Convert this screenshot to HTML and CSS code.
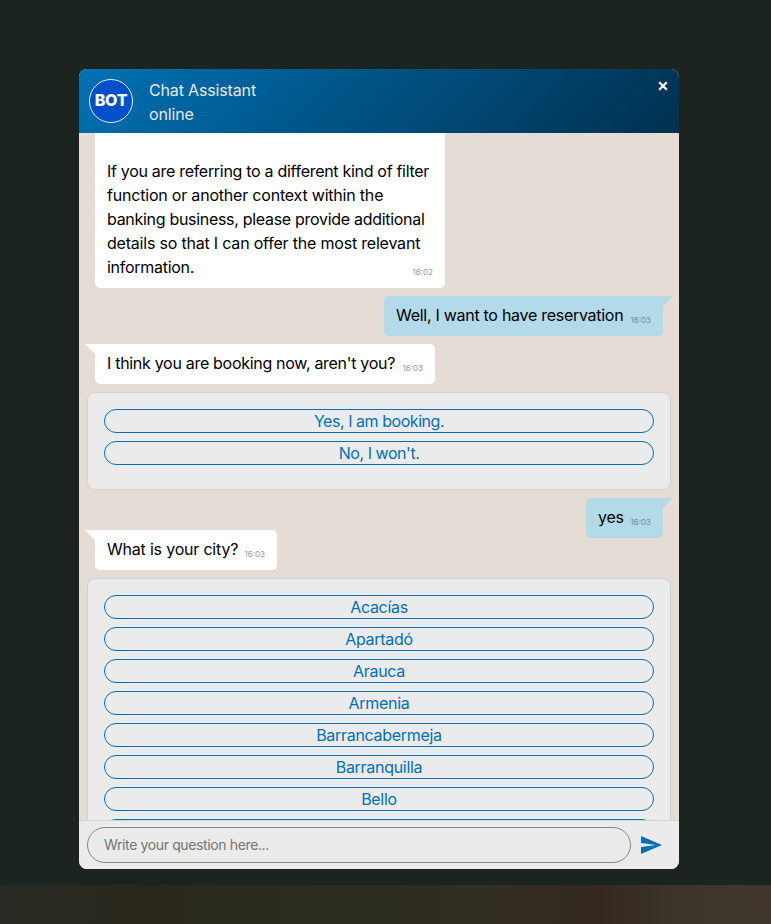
FILE: index.html
```html
<!DOCTYPE html>
<html lang="en">
<head>
<meta charset="utf-8">
<title>Chat Assistant</title>
<link rel="stylesheet" href="styles.css">
</head>
<body>
<main class="backdrop">
  <section class="chat">
    <header class="chat-header">
      <div class="avatar">BOT</div>
      <div class="identity"><div class="name">Chat Assistant</div><div class="status">online</div></div>
      <button class="close" aria-label="Close"><svg width="10" height="10" viewBox="0 0 10 10"><path d="M1.2 1.2 8.8 8.8M8.8 1.2 1.2 8.8" stroke="#fff" stroke-width="2.2"/></svg></button>
    </header>
    <div class="messages">
      <div class="bubble bot continued">
        <p class="text long"><span class="l1">If you are referring to a different kind of filter</span><br><span class="l2">function or another context within the</span><br><span class="l3">banking business, please provide additional</span><br><span class="l4">details so that I can offer the most relevant</span><br><span class="l5">information.</span></p>
        <time>16:02</time>
      </div>
      <div class="bubble user"><span class="text reservation">Well, I want to have reservation</span><time>16:03</time></div>
      <div class="bubble bot"><span class="text booking">I think you are booking now, aren't you?</span><time>16:03</time></div>
      <div class="options">
        <button class="tight">Yes, I am booking.</button>
        <button class="tight">No, I won't.</button>
      </div>
      <div class="bubble user"><span class="text yes">yes</span><time>16:03</time></div>
      <div class="bubble bot overlap"><span class="text city">What is your city?</span><time>16:03</time></div>
      <div class="options">
        <button>Acacías</button>
        <button>Apartadó</button>
        <button>Arauca</button>
        <button>Armenia</button>
        <button>Barrancabermeja</button>
        <button>Barranquilla</button>
        <button>Bello</button>
        <button></button>
      </div>
    </div>
    <footer class="composer">
      <input type="text" placeholder="Write your question here...">
      <button class="send" aria-label="Send"><svg width="21" height="18" viewBox="0 0 21 18"><path d="M0 18 21 9 0 0V7L15 9 0 11Z" fill="#0071b6"/></svg></button>
    </footer>
  </section>
</main>
<div class="page-strip"></div>
</body>
</html>
```
FILE: styles.css
```css
* { box-sizing: border-box; }
body {
  margin: 0;
  height: 924px;
  overflow: hidden;
  display: flex;
  flex-direction: column;
  background: #1c241f;
  font: 16px/24px Inter, "Liberation Sans", sans-serif;
}
button { font: inherit; padding: 0; border: 0; background: none; }
.backdrop { height: 885px; padding: 69px 92px 16px 79px; }
.page-strip {
  height: 39px;
  background: linear-gradient(90deg, #282a23 0, #29271b 20%, #2a2b1e 32%, #2c2c20 50%, #322e23 62%, #35291f 78%, #3c342a 88%, #40362d 100%);
}
.chat {
  width: 600px;
  height: 800px;
  border-radius: 8px;
  overflow: hidden;
  display: flex;
  flex-direction: column;
  background: #e5dcd6;
}
.chat-header {
  flex: none;
  height: 64px;
  padding: 10px;
  display: flex;
  color: #e8e8e8;
  background: linear-gradient(135deg, #0072b5, #00304e);
}
.avatar {
  width: 44px;
  height: 44px;
  border: 1px solid #e9edf5;
  border-radius: 50%;
  background: #0050cc;
  color: #fff;
  font-weight: 800;
  letter-spacing: -.2px;
  line-height: 41px;
  text-align: center;
}
.identity { margin: -1px 0 0 16px; flex: 1; letter-spacing: -.15px; }
.close { width: 10px; height: 10px; margin: 2px 1px 0 0; line-height: 0; }
.messages {
  flex: 1;
  min-height: 0;
  overflow: hidden;
  padding: 0 8px;
  display: flex;
  flex-direction: column;
  gap: 8px;
}
.bubble {
  position: relative;
  flex: none;
  height: 40px;
  padding: 7px 12px 8px;
  border-radius: 5px;
  display: flex;
  justify-content: space-between;
  color: #000;
}
.text { white-space: nowrap; }
.bot { align-self: flex-start; margin-left: 8px; background: #fff; }
.user { align-self: flex-end; margin-right: 8px; background: #b2dae9; }
.bot:not(.continued)::before, .user::after {
  content: "";
  position: absolute;
  top: 0;
  width: 18px;
  height: 10px;
}
.bot:not(.continued)::before { left: -10px; background: #fff; clip-path: polygon(0 0, 100% 0, 100% 100%, 10px 100%); }
.user::after { right: -10px; background: #b2dae9; clip-path: polygon(0 0, 100% 0, 8px 100%, 0 100%); }
time { align-self: flex-end; font-size: 8px; line-height: 8px; margin-bottom: 4px; color: #999; }
.user time { color: #728e98; }
.continued { width: 350px; height: 155px; padding-top: 26px; border-radius: 0 0 5px 5px; }
.long { margin: 0; width: 300px; }
.l1, .l3, .booking { letter-spacing: -.3px; }
.l2, .l4, .city { letter-spacing: -.2px; }
.l5, .reservation, .yes { letter-spacing: -.28px; }
.bubble:has(.reservation) { width: 279px; }
.bubble:has(.booking) { width: 340px; }
.bubble:has(.yes) { width: 77px; }
.bubble:has(.city) { width: 182px; }
.overlap { margin-top: -16px; }
.options {
  flex: none;
  padding: 16px;
  border: 1px solid #d1d1d1;
  border-radius: 8px;
  background: #ebebeb;
}
.options button {
  display: block;
  width: 100%;
  height: 24px;
  margin-bottom: 8px;
  border: 1px solid #0071b6;
  border-radius: 12px;
  color: #0071b6;
  line-height: 22px;
  letter-spacing: -.3px;
}
.options .tight { letter-spacing: -.45px; }
.composer {
  flex: none;
  height: 49px;
  padding: 6px 17px 6px 8px;
  border-top: 1px solid #d1d1d1;
  background: #ebebeb;
  display: flex;
  align-items: center;
  gap: 10px;
}
.composer input {
  width: 544px;
  height: 36px;
  padding: 0 16px 1px;
  border: 1px solid #858585;
  border-radius: 18px;
  background: transparent;
  font: 14px Inter, sans-serif;
  letter-spacing: -.37px;
  outline: 0;
}
.composer input::placeholder { color: #757575; }
.send { line-height: 0; }
```
